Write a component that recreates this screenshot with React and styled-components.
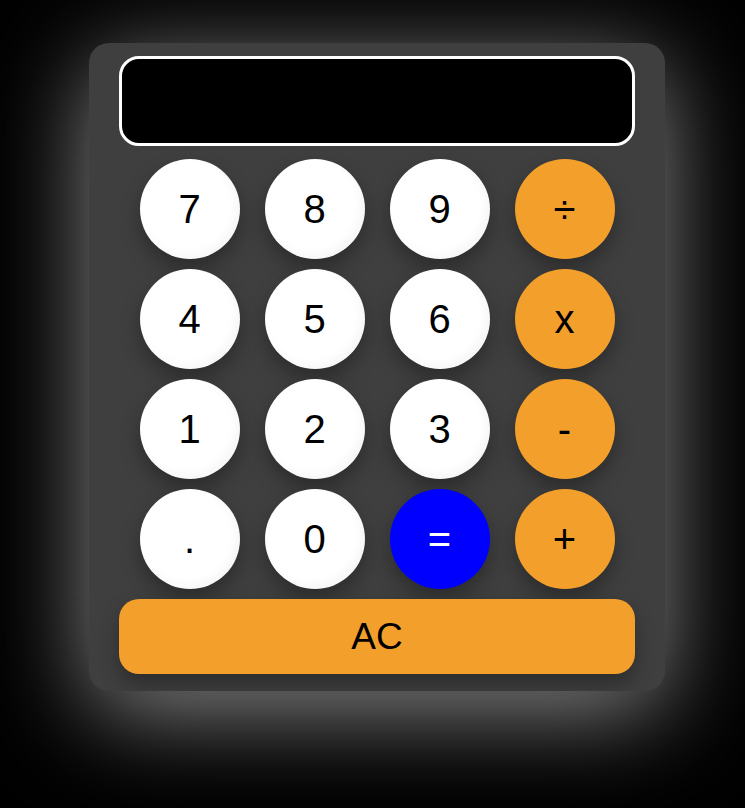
import React from 'react';
import styled, {createGlobalStyle, css} from 'styled-components';

const GlobalStyle = createGlobalStyle`
  html, body {
    margin: 0;
    background: #000;
    font-family: "Liberation Sans", Arial, sans-serif;
  }
`

const Page = styled.div`
  min-height: 808px;
  display: flex;
  justify-content: center;
  align-items: flex-start;
  padding: 43px 0 0 9px;
  box-sizing: border-box;
  overflow: hidden;
`

const Calculator = styled.div`
  width: 576px;
  box-sizing: border-box;
  padding: 13px 30px 17px;
  background: #3f3f3f;
  border-radius: 20px;
  box-shadow: 0 20px 100px rgba(255, 255, 255, 0.55);
  display: flex;
  flex-direction: column;
  gap: 13px;
`

const Display = styled.div`
  height: 90px;
  box-sizing: border-box;
  background: #000;
  border: 3px solid #fff;
  border-radius: 20px;
  color: #fff;
`

const Keys = styled.div`
  display: grid;
  grid-template-columns: repeat(4, 100px);
  justify-content: center;
  column-gap: 25px;
  row-gap: 10px;
`

const Key = styled.button`
  width: 100px;
  height: 100px;
  border: none;
  border-radius: 50%;
  padding: 0;
  font-family: "Liberation Sans", Arial, sans-serif;
  font-size: 40px;
  color: #000;
  background: #fff;
  box-shadow: 0 10px 20px rgba(0, 0, 0, 0.3), inset -4px -4px 10px rgba(0, 0, 0, 0.04);
  cursor: pointer;

  ${props => props.op && css`
    background: #f39f2c;
    box-shadow: 0 10px 20px rgba(0, 0, 0, 0.3);
  `}

  ${props => props.equals && css`
    background: #0000ff;
    color: #fff;
    box-shadow: 0 10px 20px rgba(0, 0, 0, 0.3);
  `}
`

const ClearKey = styled.button`
  height: 75px;
  margin-top: -3px;
  border: none;
  border-radius: 20px;
  background: #f39f2c;
  color: #000;
  font-family: "Liberation Sans", Arial, sans-serif;
  font-size: 37px;
  box-shadow: 0 10px 20px rgba(0, 0, 0, 0.3);
  cursor: pointer;
`

const rows = [
  ['7', '8', '9', '÷'],
  ['4', '5', '6', 'x'],
  ['1', '2', '3', '-'],
  ['.', '0', '=', '+'],
];

const ops = ['÷', 'x', '-', '+'];

export default function App() {
  return (
    <>
      <GlobalStyle />
      <Page>
        <Calculator>
          <Display />
          <Keys>
            {rows.flat().map(k => (
              <Key key={k} op={ops.includes(k)} equals={k === '='}>
                {k}
              </Key>
            ))}
          </Keys>
          <ClearKey>AC</ClearKey>
        </Calculator>
      </Page>
    </>
  );
}
